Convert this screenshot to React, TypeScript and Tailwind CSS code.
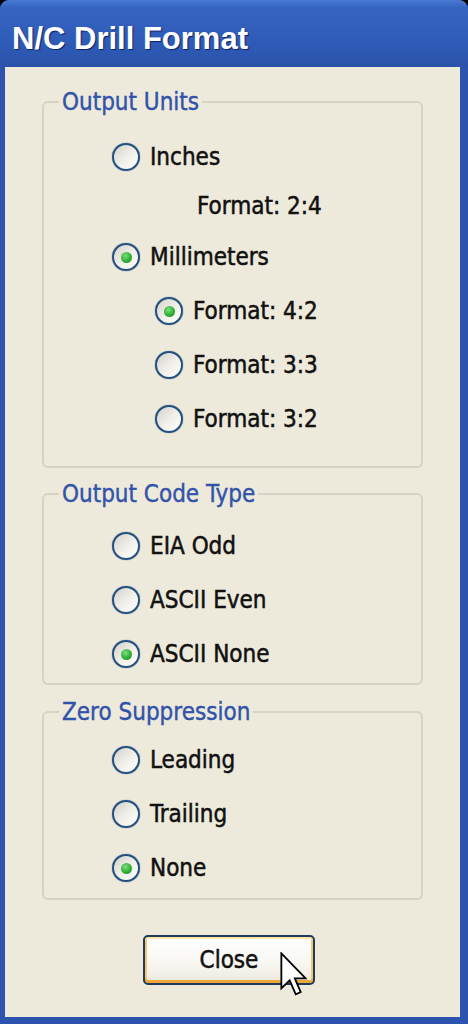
import React from "react";

const FONT = { fontFamily: '"DejaVu Sans Condensed", "DejaVu Sans", Tahoma, sans-serif' };

function Radio({ checked }: { checked?: boolean }) {
  return (
    <span className="flex h-[28px] w-[28px] shrink-0 items-center justify-center rounded-full border-2 border-[#22507f] bg-[linear-gradient(135deg,#d3d2c9_0%,#f1f0ea_55%,#ffffff_100%)] shadow-[0_0_1px_#22507f]">
      {checked && (
        <span className="h-[11px] w-[11px] rounded-full bg-[radial-gradient(circle_at_40%_35%,#7ee07f_0%,#2fae35_55%,#17841d_100%)]" />
      )}
    </span>
  );
}

function Row({
  label,
  checked,
  indent,
  h = "h-[54px]",
}: {
  label: string;
  checked?: boolean;
  indent: "top" | "sub";
  h?: string;
}) {
  return (
    <div className={`flex items-center gap-[10px] ${h} ${indent === "top" ? "pl-[68px]" : "pl-[111px]"}`}>
      <Radio checked={checked} />
      <span className="text-[24px] leading-none text-[#111] [-webkit-text-stroke:0.5px_#111]">{label}</span>
    </div>
  );
}

function Group({
  title,
  children,
  className = "",
}: {
  title: string;
  children: React.ReactNode;
  className?: string;
}) {
  return (
    <fieldset className={`rounded-[6px] border-2 border-[#d6d3c5] ${className}`}>
      <legend className="ml-[15px] px-[3px] text-[24px] leading-[28px] text-[#3153a9] [-webkit-text-stroke:0.4px_#3153a9]">
        {title}
      </legend>
      {children}
    </fieldset>
  );
}

function Cursor() {
  return (
    <svg
      className="absolute left-[135px] top-[15px]"
      width="27"
      height="45"
      viewBox="0 0 12 20"
    >
      <path
        d="M0.6 0.6 L0.6 16.2 L4.3 12.6 L7 18.8 L9.2 17.8 L6.6 11.7 L11.4 11.7 Z"
        fill="#ffffff"
        stroke="#000000"
        strokeWidth="0.8"
        strokeLinejoin="miter"
      />
    </svg>
  );
}

export default function App() {
  return (
    <div className="h-[1024px] w-[468px] bg-black" style={FONT}>
      <div className="flex h-[1024px] w-[468px] flex-col overflow-hidden rounded-t-[9px] bg-[#2c54ae]">
        <div className="h-[67px] shrink-0 bg-[linear-gradient(180deg,#4a7ad4_0%,#3564c0_12%,#2f5cb8_60%,#2a52aa_100%)] pl-[12px] pt-[21px]">
          <div
            className="text-[31px] font-bold leading-[36px] text-white [text-shadow:1px_1px_1px_#0c2166]"
            style={{ fontFamily: '"Liberation Sans", Arial, sans-serif' }}
          >
            N/C Drill Format
          </div>
        </div>
        <div className="ml-[5px] mr-[8px] mb-[7px] flex flex-1 flex-col bg-[#edeadb] px-[37px] pt-[21px]">
          <Group title="Output Units">
            <div className="pt-[16px] pb-[20px]">
              <Row label="Inches" indent="top" h="h-[50px]" />
              <div className="flex h-[48px] items-center pl-[153px]">
                <span className="text-[24px] leading-none text-[#111] [-webkit-text-stroke:0.5px_#111]">Format: 2:4</span>
              </div>
              <Row label="Millimeters" indent="top" checked />
              <Row label="Format: 4:2" indent="sub" checked />
              <Row label="Format: 3:3" indent="sub" />
              <Row label="Format: 3:2" indent="sub" />
            </div>
          </Group>
          <Group title="Output Code Type" className="mt-[12px]">
            <div className="pt-[11px] pb-[2px]">
              <Row label="EIA Odd" indent="top" />
              <Row label="ASCII Even" indent="top" />
              <Row label="ASCII None" indent="top" checked />
            </div>
          </Group>
          <Group title="Zero Suppression" className="mt-[13px]">
            <div className="pt-[7px] pb-[3px]">
              <Row label="Leading" indent="top" />
              <Row label="Trailing" indent="top" />
              <Row label="None" indent="top" checked />
            </div>
          </Group>
          <div className="mt-[35px] flex justify-center pr-[7px]">
            <div className="relative h-[50px] w-[172px] rounded-[5px] border-2 border-[#1e3a5c] bg-[linear-gradient(180deg,#ffffff_0%,#f7f6f1_60%,#ebe8dc_100%)] shadow-[inset_0_2px_0_#ffe4a3,inset_0_-3px_0_#eea83a,inset_2px_0_0_#f6c66a,inset_-2px_0_0_#f6c66a]">
              <div className="flex h-full items-center justify-center text-[24px] leading-none text-[#111] [-webkit-text-stroke:0.5px_#111]">
                Close
              </div>
              <Cursor />
            </div>
          </div>
        </div>
      </div>
    </div>
  );
}
